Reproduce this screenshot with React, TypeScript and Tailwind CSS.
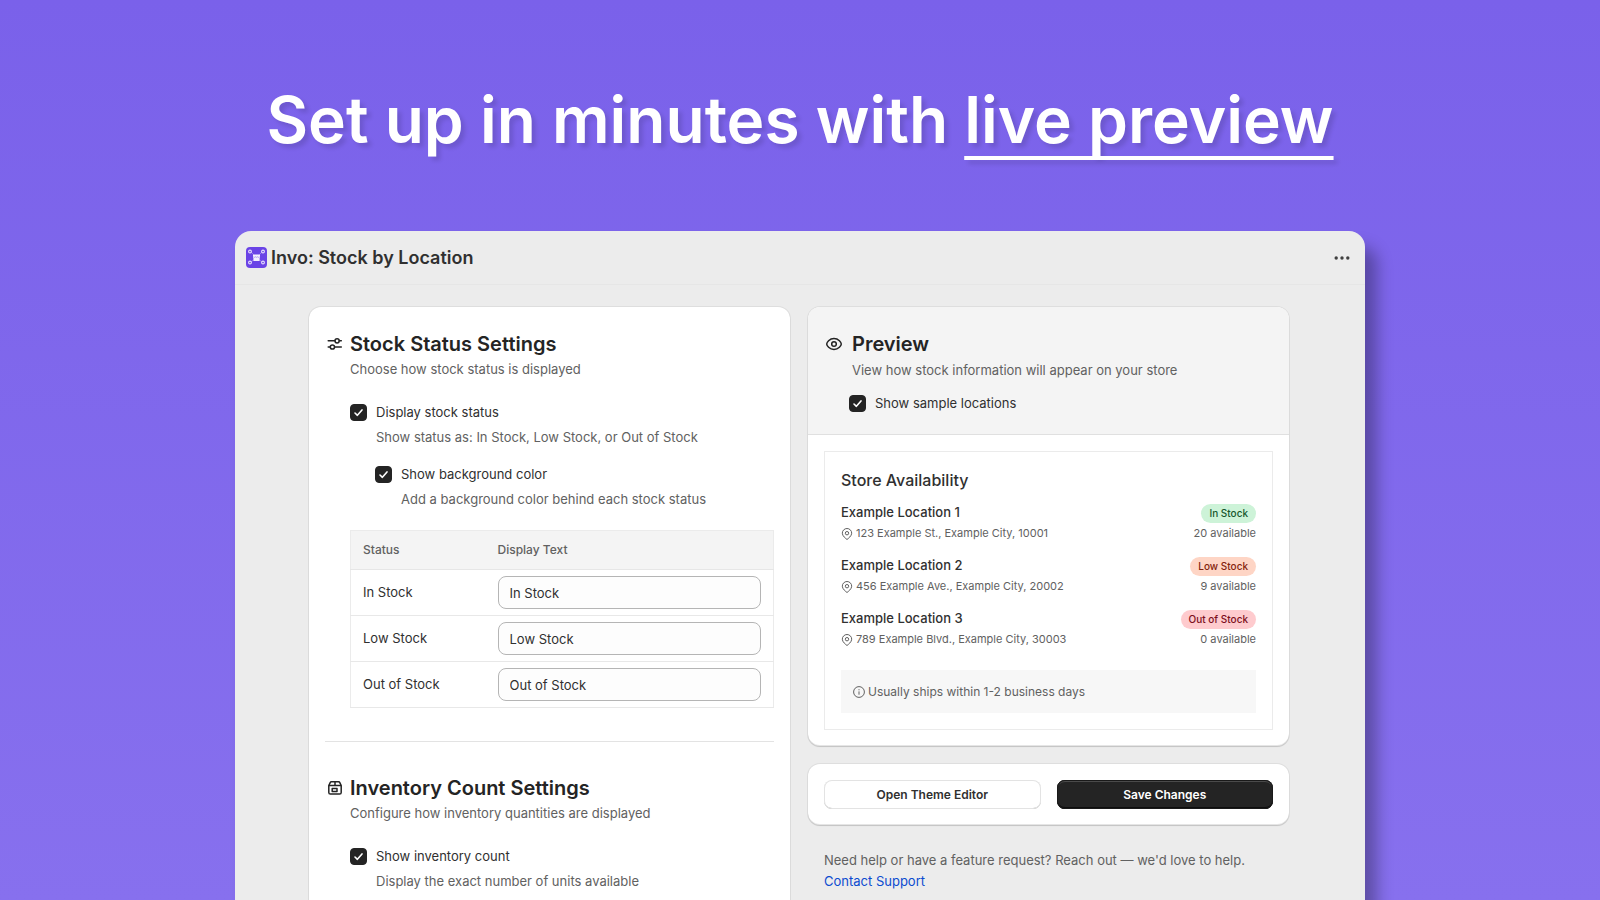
import { useState } from "react";
import type { ReactNode } from "react";

const rows = ["In Stock", "Low Stock", "Out of Stock"];

const locations = [
  { name: "Example Location 1", address: "123 Example St., Example City, 10001", status: "In Stock", count: "20 available", tone: "bg-[#cdf3d8] text-[#15572c]" },
  { name: "Example Location 2", address: "456 Example Ave., Example City, 20002", status: "Low Stock", count: "9 available", tone: "bg-[#fed5c5] text-[#85240d]" },
  { name: "Example Location 3", address: "789 Example Blvd., Example City, 30003", status: "Out of Stock", count: "0 available", tone: "bg-[#fecbce] text-[#7c0f1c]" },
];

const cardShadow =
  "shadow-[0_1px_1px_rgba(0,0,0,0.12),0_0_0_1px_rgba(0,0,0,0.06),inset_0_-1px_0_rgba(0,0,0,0.1)]";

function AppLogo() {
  return (
    <svg className="size-[21px] shrink-0" viewBox="0 0 21 21" fill="none" aria-hidden="true">
      <rect width="21" height="21" rx="4" fill="#6a43e6" />
      <path d="M5.2 5.2 7.5 7.5M15.8 5.2 13.5 7.5M5.2 14.8 7.5 13M15.8 14.8 13.5 13" stroke="#a48cf0" strokeWidth="0.8" />
      <g stroke="#e6defc" strokeWidth="1.1">
        <circle cx="4" cy="4.5" r="1.4" />
        <circle cx="17" cy="4.5" r="1.4" />
        <circle cx="4" cy="15.5" r="1.4" />
        <circle cx="17" cy="15.5" r="1.4" />
      </g>
      <path d="M7 7.5h7v3h-.4V14H7.4v-3.500H7z" fill="#f3effe" />
      <path d="M7.6 9.8q.9 1 1.9 0 1 1 2 0 1 1 1.9 0" stroke="#9c83ee" strokeWidth="0.8" />
    </svg>
  );
}

function SlidersIcon() {
  return (
    <svg className="size-4" viewBox="0 0 16 16" fill="none" stroke="#242424" strokeWidth="1.5" strokeLinecap="round" aria-hidden="true">
      <path d="M1.2 4.8h6.6M12.4 4.8h1.9M1.2 11h1.9M7.7 11h6.6" />
      <circle cx="10.1" cy="4.8" r="2.1" />
      <circle cx="5.4" cy="11" r="2.1" />
    </svg>
  );
}

function InventoryIcon() {
  return (
    <svg className="size-4" viewBox="0 0 16 16" fill="none" stroke="#242424" strokeWidth="1.5" strokeLinejoin="round" aria-hidden="true">
      <path d="M1.8 5.6 3.200 2.600a1.400 1.400 0 0 1 1.200-.8h7.200a1.400 1.400 0 0 1 1.200.8l1.400 3v6.800a1.600 1.600 0 0 1-1.600 1.600H3.400a1.600 1.600 0 0 1-1.600-1.600z" />
      <path d="M1.8 5.500h12.400M8 1.800v3.700" />
      <path d="M5.2 8.400h4.800v3H5.200z" />
    </svg>
  );
}

function EyeIcon() {
  return (
    <svg className="h-4 w-[18px]" viewBox="0 0 18 16" fill="none" stroke="#242424" strokeWidth="1.5" aria-hidden="true">
      <path d="M16.3 8c0 1.4-2.6 5.6-7.3 5.6S1.7 9.4 1.7 8 4.3 2.4 9 2.4 16.3 6.6 16.3 8z" />
      <circle cx="9" cy="8" r="2.3" />
    </svg>
  );
}

function PinIcon() {
  return (
    <svg className="size-3 shrink-0" viewBox="0 0 12 12" fill="none" stroke="#616161" strokeWidth="1" aria-hidden="true">
      <path d="M6 11.5C4.8 10.5 1.3 8 1.3 5.2a4.7 4.7 0 0 1 9.4 0C10.7 8 7.2 10.5 6 11.5z" />
      <circle cx="6" cy="5.2" r="1.7" />
    </svg>
  );
}

function InfoIcon() {
  return (
    <svg className="size-3 shrink-0" viewBox="0 0 12 12" fill="none" stroke="#616161" strokeWidth="1" aria-hidden="true">
      <circle cx="6" cy="6" r="5.4" />
      <path d="M6 5.4v3.3M6 3.2v1.1" />
    </svg>
  );
}

function Checkbox({ id, label, help }: { id: string; label: string; help?: string }) {
  const [checked, setChecked] = useState(true);

  return (
    <div className="grid grid-cols-[17px_1fr] gap-x-[9px] gap-y-1">
      <span className="relative flex h-[21px] items-center">
        <input
          id={id}
          type="checkbox"
          checked={checked}
          onChange={(e) => setChecked(e.target.checked)}
          className="size-[17px] appearance-none rounded-[4px] border border-[#8a8a8a] bg-white checked:border-[#242424] checked:bg-[#242424]"
        />
        {checked && (
          <svg className="pointer-events-none absolute left-0 size-[17px]" viewBox="0 0 17 17" fill="none" stroke="white" strokeWidth="1.6" strokeLinecap="round" strokeLinejoin="round" aria-hidden="true">
            <path d="M5 9 7.4 11.3 12 5.9" />
          </svg>
        )}
      </span>
      <label htmlFor={id} className="text-[#303030]">{label}</label>
      {help && <p className="col-start-2 text-[#616161]">{help}</p>}
    </div>
  );
}

function SectionTitle({ icon, title, subtitle }: { icon: ReactNode; title: string; subtitle: string }) {
  return (
    <div className="grid grid-cols-[16px_1fr] items-center gap-x-[7px] gap-y-px pl-0.5">
      {icon}
      <h2 className="text-xl leading-7 font-semibold text-[#242424]">{title}</h2>
      <p className="col-start-2 text-[#616161]">{subtitle}</p>
    </div>
  );
}

function StatusTable() {
  const [texts, setTexts] = useState(rows);

  return (
    <table className="mt-1 w-full table-fixed border border-[#ebebeb] text-left">
      <thead>
        <tr className="h-[39px] border-b border-[#e6e6e6] bg-[#f4f4f4] text-xs text-[#616161]">
          <th className="w-[147px] pl-3 font-medium">Status</th>
          <th className="pr-3 font-medium">Display Text</th>
        </tr>
      </thead>
      <tbody>
        {rows.map((row, i) => (
          <tr key={row} className="border-b border-[#e8e8e8]">
            <td className="pl-3">{row}</td>
            <td className="py-1.5 pr-3">
              <input
                aria-label={row + " display text"}
                value={texts[i]}
                onChange={(e) => setTexts(texts.map((t, j) => (j === i ? e.target.value : t)))}
                className="block h-[33px] w-full rounded-lg border border-[#b5b5b5] bg-[#fdfdfd] px-[11px]"
              />
            </td>
          </tr>
        ))}
      </tbody>
    </table>
  );
}

function SettingsCard() {
  return (
    <section className={"rounded-t-xl bg-white px-4 pt-[23px] pb-8 " + cardShadow}>
      <SectionTitle icon={<SlidersIcon />} title="Stock Status Settings" subtitle="Choose how stock status is displayed" />
      <div className="flex flex-col gap-4 pt-[22px] pl-[25px]">
        <Checkbox id="stock-status" label="Display stock status" help="Show status as: In Stock, Low Stock, or Out of Stock" />
        <div className="pl-[25px]">
          <Checkbox id="background-color" label="Show background color" help="Add a background color behind each stock status" />
        </div>
        <StatusTable />
      </div>
      <hr className="mt-[33px] mb-8 border-[#e3e3e3]" />
      <SectionTitle icon={<InventoryIcon />} title="Inventory Count Settings" subtitle="Configure how inventory quantities are displayed" />
      <div className="pt-[22px] pl-[25px]">
        <Checkbox id="inventory-count" label="Show inventory count" help="Display the exact number of units available" />
      </div>
    </section>
  );
}

function PreviewCard() {
  return (
    <section className={"overflow-hidden rounded-xl bg-white " + cardShadow}>
      <div className="border-b border-[#e0e0e0] bg-[#f4f4f4] px-[17px] pt-[23px] pb-5">
        <div className="grid grid-cols-[18px_1fr] items-center gap-x-[9px] gap-y-0.5">
          <EyeIcon />
          <h2 className="text-xl leading-7 font-semibold text-[#242424]">Preview</h2>
          <p className="col-start-2 text-[#616161]">View how stock information will appear on your store</p>
        </div>
        <div className="pt-3 pl-6">
          <Checkbox id="sample-locations" label="Show sample locations" />
        </div>
      </div>
      <div className="p-4">
        <div className="border border-[#ebebeb] p-4">
          <h3 className="text-base leading-6 font-medium">Store Availability</h3>
          <ul className="flex flex-col gap-[11px] pt-2.5">
            {locations.map((l) => (
              <li key={l.name} className="flex justify-between">
                <div>
                  <p className="font-medium">{l.name}</p>
                  <p className="flex items-center gap-[3px] text-[11px] text-[#616161]">
                    <PinIcon />
                    {l.address}
                  </p>
                </div>
                <div className="flex flex-col items-end pt-0.5">
                  <span className={"rounded-full px-2 text-[10px] leading-[19px] font-medium " + l.tone}>{l.status}</span>
                  <span className="text-[11px] text-[#616161]">{l.count}</span>
                </div>
              </li>
            ))}
          </ul>
          <p className="mt-5 flex h-[43px] items-center gap-[3px] bg-[#f7f7f7] px-3 text-xs text-[#616161]">
            <InfoIcon />
            Usually ships within 1-2 business days
          </p>
        </div>
      </div>
    </section>
  );
}

export default function App() {
  return (
    <main className="h-screen overflow-hidden bg-linear-to-b from-[#7a61ea] to-[#8770ee] font-[Inter,sans-serif] text-[13px] leading-[21px] text-[#303030]">
      <h1 className="pt-[75px] text-center text-[64px] leading-[90px] font-semibold text-white [text-shadow:4px_4px_4px_rgba(0,0,0,0.12)]">
        Set up in minutes with{" "}
        <span className="underline decoration-4 underline-offset-[13px] [text-decoration-skip-ink:none]">live preview</span>
      </h1>
      <div className="mx-auto mt-[66px] min-h-[669px] max-w-[1130px] rounded-t-2xl bg-[#ececec] shadow-[12px_16px_16px_rgba(0,0,0,0.3)]">
        <header className="flex h-[54px] items-center gap-1 border-b border-[#e6e6e6] px-[11px]">
          <AppLogo />
          <span className="text-lg font-semibold text-[#303030]">Invo: Stock by Location</span>
          <button type="button" aria-label="More actions" className="ml-auto flex size-6 items-center justify-center">
            <svg className="h-4 w-[18px]" viewBox="0 0 18 16" fill="#404040" aria-hidden="true">
              <circle cx="3.2" cy="8" r="1.7" />
              <circle cx="9" cy="8" r="1.7" />
              <circle cx="14.8" cy="8" r="1.7" />
            </svg>
          </button>
        </header>
        <div className="grid grid-cols-2 gap-[18px] pt-[22px] pr-[76px] pl-[74px]">
          <SettingsCard />
          <div className="flex flex-col gap-[18px]">
            <PreviewCard />
            <section className={"flex gap-4 rounded-xl bg-white p-4 " + cardShadow}>
              <button type="button" className="h-[29px] flex-1 rounded-lg bg-white text-xs font-semibold shadow-[inset_0_0_0_1px_#e3e3e3,inset_0_-1px_0_#b5b5b5]">
                Open Theme Editor
              </button>
              <button type="button" className="h-[29px] flex-1 rounded-lg bg-[#242424] text-xs font-semibold text-white shadow-[inset_0_0_0_1px_#1a1a1a,inset_0_-2px_0_#0d0d0d,inset_0_2px_0_#4a4a4a]">
                Save Changes
              </button>
            </section>
            <div className="px-4 pt-[7px] text-[#616161]">
              <p>Need help or have a feature request? Reach out — we'd love to help.</p>
              <a href="#support" className="text-[#0b4bd0]">Contact Support</a>
            </div>
          </div>
        </div>
      </div>
    </main>
  );
}
